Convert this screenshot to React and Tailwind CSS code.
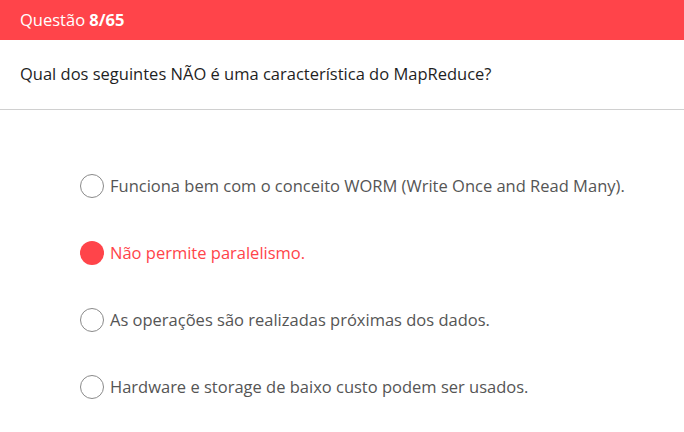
import React, { useState } from 'react';

const options = [
  'Funciona bem com o conceito WORM (Write Once and Read Many).',
  'Não permite paralelismo.',
  'As operações são realizadas próximas dos dados.',
  'Hardware e storage de baixo custo podem ser usados.',
];

const App = () => {
  const [selected, setSelected] = useState(1);

  return (
    <div className="w-[684px] h-[432px] bg-white overflow-hidden" style={{ fontFamily: '"Open Sans", sans-serif' }}>
      <div className="h-10 bg-[#ff444a] flex items-center px-5 text-white text-[16.5px]">
        Questão&nbsp;<span className="font-bold">8/65</span>
      </div>
      <div className="h-[70px] flex items-center px-5 text-[16.5px] text-[#1f1f1f] border-b border-[#d0d0d0]">
        Qual dos seguintes NÃO é uma característica do MapReduce?
      </div>
      <div className="flex flex-col pl-20 pt-[64px] gap-[43px]">
        {options.map((opt, i) => (
          <div
            key={i}
            className="flex items-center gap-[6px] h-6 cursor-pointer"
            onClick={() => setSelected(i)}
          >
            {selected === i ? (
              <span className="w-6 h-6 rounded-full bg-[#ff444a]" />
            ) : (
              <span className="w-6 h-6 rounded-full border border-[#8a8a8a]" />
            )}
            <span className={`text-[16.5px] ${selected === i ? 'text-[#ff444a]' : 'text-[#555555]'}`}>
              {opt}
            </span>
          </div>
        ))}
      </div>
    </div>
  );
};

export default App;
